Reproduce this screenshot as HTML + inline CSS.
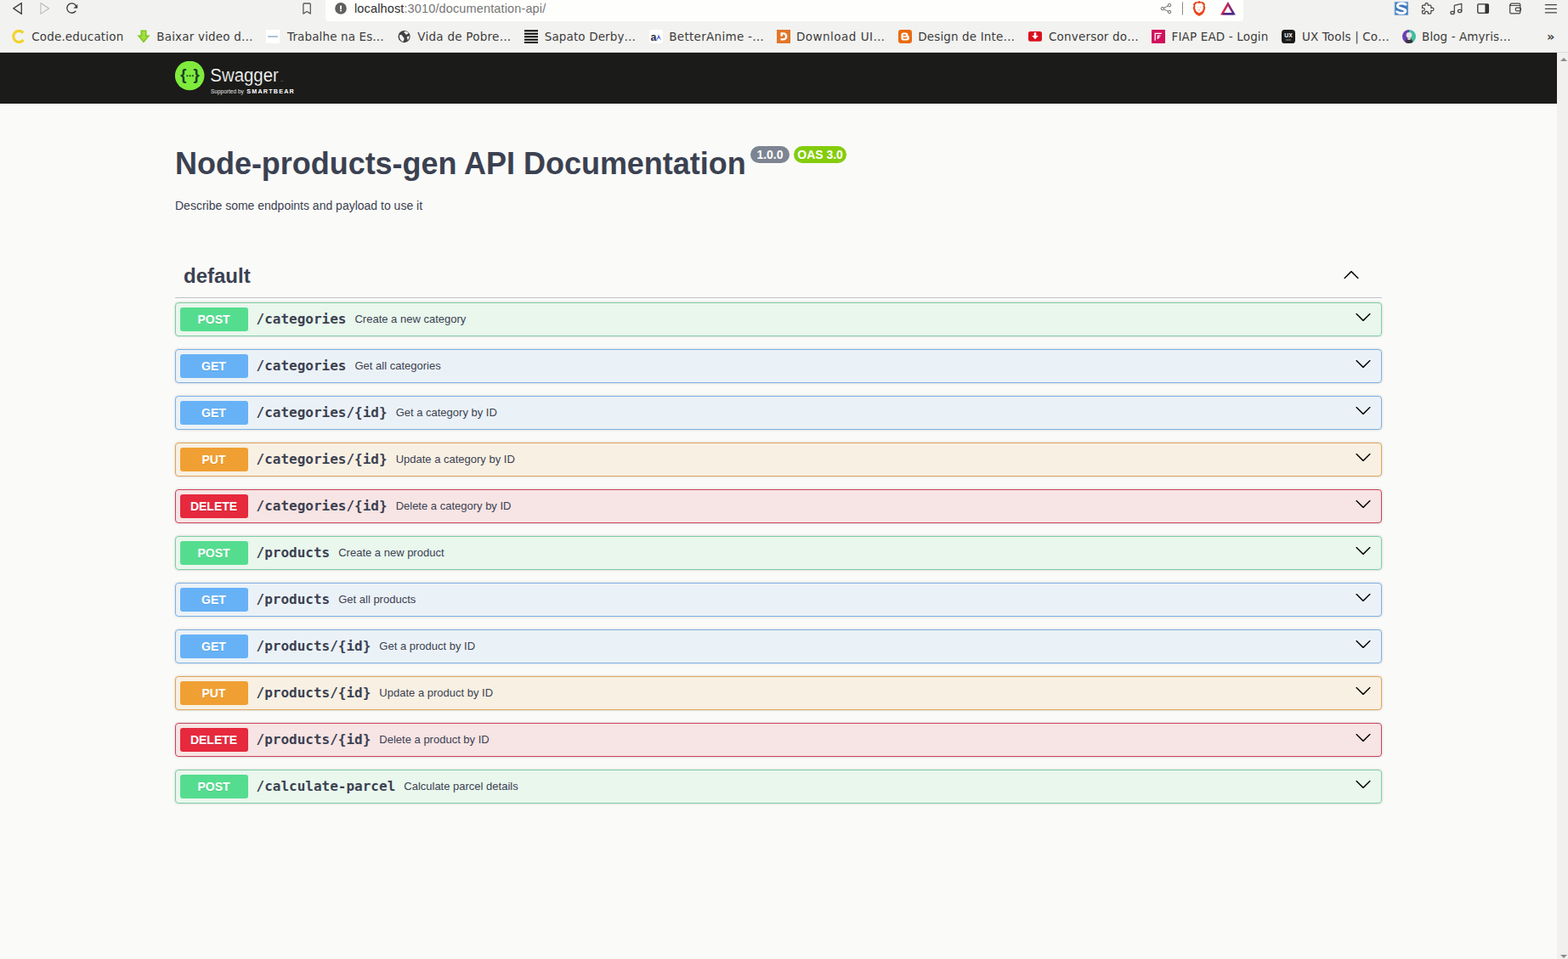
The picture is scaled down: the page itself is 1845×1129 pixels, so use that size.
<!DOCTYPE html>
<html lang="en">
<head>
<meta charset="utf-8">
<title>Swagger UI</title>
<style>
*{box-sizing:border-box}
html,body{margin:0;padding:0}
body{width:1845px;height:1129px;overflow:hidden;position:relative;background:#fafaf8;font-family:"Liberation Sans",sans-serif;color:#3b4151}
/* ---------- browser chrome ---------- */
#chrome{position:absolute;left:0;top:0;width:1845px;height:62px;background:#f2f2f0;border-bottom:1px solid #dcdcda;font-family:"DejaVu Sans","Liberation Sans",sans-serif;color:#3a3a3a}
#urlbar{position:absolute;left:383px;top:-6px;width:1080px;height:31px;background:#fefefd;border-radius:4px}
#url{position:absolute;left:417px;top:0;font-family:"Liberation Sans",sans-serif;font-size:14.5px;line-height:20px;color:#767676;white-space:nowrap;letter-spacing:.135px}
#url b{font-weight:normal;color:#2e2e2e}
.ic{position:absolute}
.bm{position:absolute;top:32px;height:22px;line-height:22px;font-size:13.5px;white-space:nowrap;color:#3c3c3c}
.fav{position:absolute;top:35px;width:16px;height:16px}
/* ---------- page ---------- */
#page{position:absolute;left:0;top:62px;width:1832px;height:1067px;background:#fafaf8;overflow:hidden}
#scroll{position:absolute;left:1832px;top:62px;width:13px;height:1067px;background:#f1f0ee}
#scroll i{position:absolute;left:3.5px;width:0;height:0;border-left:4px solid transparent;border-right:4px solid transparent}
#scroll .up{top:6px;border-bottom:4.5px solid #8e8a8c}
#scroll .dn{bottom:1px;border-top:4.5px solid #8e8a8c}
#topbar{background:#1b1b19;height:60px;padding:10px 0}
.wrap{width:1460px;margin:0 auto;padding:0 20px;position:relative}
#logo{display:block;height:40px;width:150px}
.info{margin:50px 0}
.info h2{margin:0;letter-spacing:-0.03px;font-size:36px;line-height:normal;font-weight:bold;color:#3b4151}
.info h2 span.badge{display:inline-block;vertical-align:super;font-size:10px}
.ver{display:inline-block;position:relative;top:-5px;vertical-align:super;margin:0 0 0 5px;padding:2px 4px;border-radius:57px;background:#7d8492;font-size:10px}
.ver pre{margin:0;padding:0;font-family:"Liberation Sans",sans-serif;font-size:14px;font-weight:bold;color:#fff;line-height:normal}
.ver.oas{background:#84cc0c}
.info p{margin:0;font-size:14px;line-height:normal;color:#3b4151}
.info p.desc{margin-top:20px}
.tag{display:flex;align-items:center;margin:0 0 5px;padding:10px 20px 10px 10px;border-bottom:1px solid rgba(59,65,81,.3);font-size:24px;font-weight:bold;color:#3b4151}
.tag span{flex:1;line-height:30px}
.op{display:flex;align-items:center;height:40px;margin:0 0 15px;padding:5px;border:1px solid #000;border-radius:4px;box-shadow:0 0 3px rgba(0,0,0,.19)}
.op .m{width:80px;padding:6px 1px 6px 0;border-radius:3px;text-align:center;font-size:14px;line-height:16px;font-weight:bold;color:#fff;text-shadow:0 1px 0 rgba(0,0,0,.1)}
.op .p{position:relative;top:-1px;left:-.5px;padding:0 10px;font-family:"DejaVu Sans Mono","Liberation Mono",monospace;font-size:16px;font-weight:bold;color:#3b4151;white-space:nowrap}
.op .d{position:relative;top:-1px;left:-.5px;flex:1;font-size:13px;color:#3b4151;white-space:nowrap}
.op svg{margin-right:6px;position:relative;top:-3px}
.tag svg{margin-right:6px;position:relative;top:-2px}
svg.arr{fill:#000;flex:none}
.post{border-color:#7fcda2;background:rgba(85,221,143,.1)}.post .m{background:#55dd8f}
.get{border-color:#7fb1e3;background:rgba(103,178,246,.1)}.get .m{background:#67b2f6}
.put{border-color:#dfa45a;background:rgba(240,160,51,.1)}.put .m{background:#f0a033}
.delete{border-color:#cc4458;background:rgba(230,41,61,.1)}.delete .m{background:#e6293d}
</style>
</head>
<body>
<div id="page">
  <div id="topbar"><div class="wrap">
    <svg id="logo" viewBox="0 0 150 40"><circle cx="17.2" cy="17" r="17.3" fill="#7feb3c"/><g font-family="Liberation Sans, sans-serif" font-weight="bold" font-size="18.5" fill="#173d2a" text-anchor="middle"><text x="9.8" y="22.2">{</text><text x="25.1" y="22.2">}</text></g><circle cx="14.4" cy="17.2" r="1.05" fill="#173d2a"/><circle cx="17.65" cy="17.2" r="1.05" fill="#173d2a"/><circle cx="20.9" cy="17.2" r="1.05" fill="#173d2a"/><text x="41.3" y="24.4" font-family="Liberation Sans, sans-serif" font-size="22" fill="#fff" stroke="#1b1b19" stroke-width="0.22" textLength="80.5" lengthAdjust="spacingAndGlyphs">Swagger</text><text x="124.2" y="23.8" font-family="Liberation Sans, sans-serif" font-size="2.2" fill="#999">TM</text><text x="42" y="38.2" font-family="Liberation Sans, sans-serif" font-size="6.6" fill="#e4e4e4" textLength="38.8" lengthAdjust="spacingAndGlyphs">Supported by</text><text x="84.2" y="38.2" font-family="Liberation Sans, sans-serif" font-weight="bold" font-size="7.2" fill="#fff" textLength="55.6" lengthAdjust="spacing">SMARTBEAR</text></svg>
  </div></div>
  <div class="wrap">
    <div class="info">
      <h2>Node-products-gen API Documentation<span class="ver"><pre> 1.0.0 </pre></span><span class="ver oas"><pre>OAS 3.0</pre></span></h2>
      <p class="desc">Describe some endpoints and payload to use it</p>
    </div>
    <div class="tag"><span>default</span><svg class="arr" width="20" height="20" viewBox="0 0 20 20"><path d="M17.418 14.908c.272.268.709.268.979 0s.271-.701 0-.969l-7.908-7.83c-.27-.268-.707-.268-.979 0l-7.908 7.83c-.27.268-.27.701 0 .969.271.268.709.268.979 0L10 7.767l7.418 7.141z"/></svg></div>
    <div class="op post"><div class="m">POST</div><div class="p">/categories</div><div class="d">Create a new category</div><svg class="arr" width="20" height="20" viewBox="0 0 20 20"><path d="M17.418 6.109c.272-.268.709-.268.979 0s.271.701 0 .969l-7.908 7.83c-.27.268-.707.268-.979 0l-7.908-7.83c-.27-.268-.27-.701 0-.969.271-.268.709-.268.979 0L10 13.25l7.418-7.141z"/></svg></div>
    <div class="op get"><div class="m">GET</div><div class="p">/categories</div><div class="d">Get all categories</div><svg class="arr" width="20" height="20" viewBox="0 0 20 20"><path d="M17.418 6.109c.272-.268.709-.268.979 0s.271.701 0 .969l-7.908 7.83c-.27.268-.707.268-.979 0l-7.908-7.83c-.27-.268-.27-.701 0-.969.271-.268.709-.268.979 0L10 13.25l7.418-7.141z"/></svg></div>
    <div class="op get"><div class="m">GET</div><div class="p">/categories/{id}</div><div class="d">Get a category by ID</div><svg class="arr" width="20" height="20" viewBox="0 0 20 20"><path d="M17.418 6.109c.272-.268.709-.268.979 0s.271.701 0 .969l-7.908 7.83c-.27.268-.707.268-.979 0l-7.908-7.83c-.27-.268-.27-.701 0-.969.271-.268.709-.268.979 0L10 13.25l7.418-7.141z"/></svg></div>
    <div class="op put"><div class="m">PUT</div><div class="p">/categories/{id}</div><div class="d">Update a category by ID</div><svg class="arr" width="20" height="20" viewBox="0 0 20 20"><path d="M17.418 6.109c.272-.268.709-.268.979 0s.271.701 0 .969l-7.908 7.83c-.27.268-.707.268-.979 0l-7.908-7.83c-.27-.268-.27-.701 0-.969.271-.268.709-.268.979 0L10 13.25l7.418-7.141z"/></svg></div>
    <div class="op delete"><div class="m">DELETE</div><div class="p">/categories/{id}</div><div class="d">Delete a category by ID</div><svg class="arr" width="20" height="20" viewBox="0 0 20 20"><path d="M17.418 6.109c.272-.268.709-.268.979 0s.271.701 0 .969l-7.908 7.83c-.27.268-.707.268-.979 0l-7.908-7.83c-.27-.268-.27-.701 0-.969.271-.268.709-.268.979 0L10 13.25l7.418-7.141z"/></svg></div>
    <div class="op post"><div class="m">POST</div><div class="p">/products</div><div class="d">Create a new product</div><svg class="arr" width="20" height="20" viewBox="0 0 20 20"><path d="M17.418 6.109c.272-.268.709-.268.979 0s.271.701 0 .969l-7.908 7.83c-.27.268-.707.268-.979 0l-7.908-7.83c-.27-.268-.27-.701 0-.969.271-.268.709-.268.979 0L10 13.25l7.418-7.141z"/></svg></div>
    <div class="op get"><div class="m">GET</div><div class="p">/products</div><div class="d">Get all products</div><svg class="arr" width="20" height="20" viewBox="0 0 20 20"><path d="M17.418 6.109c.272-.268.709-.268.979 0s.271.701 0 .969l-7.908 7.83c-.27.268-.707.268-.979 0l-7.908-7.83c-.27-.268-.27-.701 0-.969.271-.268.709-.268.979 0L10 13.25l7.418-7.141z"/></svg></div>
    <div class="op get"><div class="m">GET</div><div class="p">/products/{id}</div><div class="d">Get a product by ID</div><svg class="arr" width="20" height="20" viewBox="0 0 20 20"><path d="M17.418 6.109c.272-.268.709-.268.979 0s.271.701 0 .969l-7.908 7.83c-.27.268-.707.268-.979 0l-7.908-7.83c-.27-.268-.27-.701 0-.969.271-.268.709-.268.979 0L10 13.25l7.418-7.141z"/></svg></div>
    <div class="op put"><div class="m">PUT</div><div class="p">/products/{id}</div><div class="d">Update a product by ID</div><svg class="arr" width="20" height="20" viewBox="0 0 20 20"><path d="M17.418 6.109c.272-.268.709-.268.979 0s.271.701 0 .969l-7.908 7.83c-.27.268-.707.268-.979 0l-7.908-7.83c-.27-.268-.27-.701 0-.969.271-.268.709-.268.979 0L10 13.25l7.418-7.141z"/></svg></div>
    <div class="op delete"><div class="m">DELETE</div><div class="p">/products/{id}</div><div class="d">Delete a product by ID</div><svg class="arr" width="20" height="20" viewBox="0 0 20 20"><path d="M17.418 6.109c.272-.268.709-.268.979 0s.271.701 0 .969l-7.908 7.83c-.27.268-.707.268-.979 0l-7.908-7.83c-.27-.268-.27-.701 0-.969.271-.268.709-.268.979 0L10 13.25l7.418-7.141z"/></svg></div>
    <div class="op post"><div class="m">POST</div><div class="p">/calculate-parcel</div><div class="d">Calculate parcel details</div><svg class="arr" width="20" height="20" viewBox="0 0 20 20"><path d="M17.418 6.109c.272-.268.709-.268.979 0s.271.701 0 .969l-7.908 7.83c-.27.268-.707.268-.979 0l-7.908-7.83c-.27-.268-.27-.701 0-.969.271-.268.709-.268.979 0L10 13.25l7.418-7.141z"/></svg></div>
  </div>
</div>
<div id="scroll"><i class="up"></i><i class="dn"></i></div>
<div id="chrome">
  <div id="urlbar"></div>
  <div id="url"><b>localhost</b>:3010/documentation-api/</div>
  <svg class="ic" style="left:0;top:0" width="120" height="26" viewBox="0 0 120 26" fill="none" stroke-linejoin="round" stroke-linecap="round"><path d="M25.300 3.600v12.800L15.800 9.950z" stroke="#454545" stroke-width="1.450"/><path d="M47.900 3.500v12.900l9.700-6.450z" stroke="#b9b9b7" stroke-width="1.050"/><path d="M88.87 13.26A5.7 5.7 0 1 1 89.67 7.19" stroke="#3d3d3d" stroke-width="1.35"/><path d="M91 5.7v3.7h-3.7z" fill="#3d3d3d" stroke="#3d3d3d" stroke-width=".5"/></svg>
  <svg class="ic" style="left:350px;top:0" width="24" height="26" viewBox="0 0 24 26" fill="none"><path d="M6.900 16.100V5a1 1 0 0 1 1-1h6.400a1 1 0 0 1 1 1v11.100L11.100 13.500z" stroke="#5a5a5a" stroke-width="1.300" stroke-linejoin="round"/></svg>
  <svg class="ic" style="left:392px;top:0" width="20" height="22" viewBox="0 0 20 22"><circle cx="9" cy="9.900" r="6.800" fill="#606060"/><rect x="8" y="6.600" width="2" height="4.300" fill="#fff"/><rect x="8" y="11.700" width="2" height="1.700" fill="#fff"/></svg>
  <svg class="ic" style="left:1360px;top:0" width="100" height="22" viewBox="0 0 100 22" fill="none"><g stroke="#666" stroke-width=".95"><circle cx="7.900" cy="10.100" r="1.750"/><circle cx="16" cy="6.200" r="1.750"/><circle cx="16" cy="14" r="1.750"/><path d="M9.500 9.300l4.900-2.350M9.500 10.900l4.900 2.350"/></g><path d="M31.500 2.300v15.300" stroke="#8a8a8a" stroke-width="1"/><path d="M51 1l2.200 1.300h2.300l2.600 2.600-.7 1.700.9 2.600-1.500 5-2.200 2.700L51 18.900l-3.600-2-2.200-2.700-1.500-5 .9-2.600-.7-1.700 2.600-2.600h2.300z" fill="#e8451a"/><path transform="translate(51 9.600) scale(1.180) translate(-51 -9.900)" d="M51 5.200l2.100-.5 2.100 1.900-.4 1.600.5 1.300-1.200 3.200-3.100 2.300-3.100-2.300-1.200-3.200.5-1.300-.4-1.600 2.100-1.900z" fill="#fff"/><path d="M49.300 8.200l1.100.8-.9.300zM52.700 8.200l-1.100.8.900.3zM50.200 11.800l.8-.5.800.5-.8.800z" fill="#e8451a"/><defs><linearGradient id="bat" x1="0" x2="1" y1="0" y2="0"><stop offset="0" stop-color="#f02640"/><stop offset=".5" stop-color="#b3245f"/><stop offset="1" stop-color="#4b2a8e"/></linearGradient></defs><path d="M84.900 4.700l6.700 11.500H78.200z" stroke="url(#bat)" stroke-width="2.600" stroke-linejoin="miter"/><path d="M78.500 16.300h13" stroke="#4b2a8e" stroke-width="2.400"/></svg>
  <svg class="ic" style="left:1636px;top:0" width="200" height="22" viewBox="0 0 200 22" fill="none" stroke-linejoin="round" stroke-linecap="round"><rect x="5.300" y="2.300" width="15.500" height="15.400" fill="#3a78bc" stroke="#8fb0d8" stroke-width=".6"/><path d="M18 5.200c-5-2.600-10.500-.8-9.500 2.300 1 3 8.500 2 9.300 5.200.7 3-5.800 3.900-10 1.200" stroke="#fff" stroke-width="3"/><path d="M42.600 3.600c1.500 0 2.100 1.400 1.500 2.500h2.800c.6 0 1 .4 1 1v2.300c1.500-.8 3.100 0 3.100 1.500s-1.600 2.300-3.100 1.500v2.700c0 .6-.4 1-1 1h-2.600c.7-1.600-.3-2.800-1.700-2.800s-2.400 1.200-1.700 2.800h-2.400c-.6 0-1-.4-1-1v-2.600c1.400.7 2.800-.1 2.800-1.500s-1.400-2.200-2.800-1.500V7.100c0-.6.400-1 1-1h2.600c-.6-1.100 0-2.500 1.500-2.500z" stroke="#444" stroke-width="1.200"/><g stroke="#444" stroke-width="1.200"><path d="M75.300 14.900V6.300l8.500-1.900v8.500"/><ellipse cx="73.100" cy="15" rx="2.200" ry="1.700"/><ellipse cx="81.600" cy="13" rx="2.200" ry="1.700"/></g><rect x="102.800" y="4.900" width="12.600" height="10.400" rx="1" stroke="#333" stroke-width="1.300"/><rect x="111.400" y="4.900" width="4" height="10.400" fill="#333"/><g stroke="#444" stroke-width="1.200"><path d="M152.800 6.500H142a1.300 1.300 0 0 1 0-2.300h9.500a1.300 1.300 0 0 1 1.300 1.300v9a1.300 1.300 0 0 1-1.300 1.300H142a1.300 1.300 0 0 1-1.300-1.300V5.500"/><rect x="147.300" y="9.200" width="6.200" height="3.600" rx="1.200"/></g><path d="M182.400 5.600h13M182.400 10.300h13M182.400 14.900h13" stroke="#444" stroke-width="1.300"/></svg>
  <svg class="fav" style="left:13.5px" viewBox="0 0 16 16"><path d="M13.3 3.6A6.6 6.6 0 1 0 13.6 12" fill="none" stroke="#f2d327" stroke-width="3.1"/></svg>
  <span class="bm" style="left:37.14px;letter-spacing:0.175px">Code.education</span>
  <svg class="fav" style="left:161.1px" viewBox="0 0 16 16"><path d="M4.5 0.5h7v6h4L8 15.5 0.5 6.5h4z" fill="#7ec621"/><path d="M6 2h4v6h2.5L8 13 3.5 8H6z" fill="#a4dc3c"/></svg>
  <span class="bm" style="left:184.24px;letter-spacing:0.191px">Baixar video d…</span>
  <svg class="fav" style="left:313.0px" viewBox="0 0 16 16"><rect width="16" height="16" fill="#fff"/><rect x="2.2" y="7.3" width="11.6" height="1.5" fill="#6f8fc0" opacity=".75"/></svg>
  <span class="bm" style="left:338.04px;letter-spacing:0.127px">Trabalhe na Es…</span>
  <svg class="fav" style="left:467.8px" viewBox="0 0 16 16"><circle cx="7.6" cy="8.1" r="7.1" fill="#3f4042"/><path d="M2.2 6.2c1.6-.4 3.3.2 3.6 1.6.3 1.5 1.7 1.2 1.8 2.6.1 1.300-1 2.300-1.300 3.600C3.500 13.200 1.500 10 2.200 6.200zM8.200 2c1.900-.3 3.700.6 4.700 2.100-1.300.4-1.400 1.700-2.800 1.700-1.300 0-.7-1.500-1.900-1.800-.9-.3-.7-1.300 0-2zM13.500 7.300c.3 1.900-.4 3.700-1.700 4.900-.6-.9-.2-1.800-.9-2.600-.600-.8.300-1.800 1.200-1.900.6-.1 1-.2 1.400-.4z" fill="#f2f2f0"/></svg>
  <span class="bm" style="left:491.28px;letter-spacing:0.258px">Vida de Pobre…</span>
  <svg class="fav" style="left:616.7px" viewBox="0 0 16 16"><path d="M0 1.200h16M0 4.700h16M0 8.200h16M0 11.700h16M0 15.100h16" stroke="#0a0a0a" stroke-width="2.1"/></svg>
  <span class="bm" style="left:640.76px;letter-spacing:0.125px">Sapato Derby…</span>
  <svg class="fav" style="left:763.9px" viewBox="0 0 16 16"><rect width="16" height="16" rx="3" fill="#fff"/><text x="1.600" y="12.600" font-family="Liberation Sans, sans-serif" font-weight="bold" font-size="12.500" fill="#2b2b33">a</text><path d="M8.500 12.500l2.500-7 3 7-2.800-3z" fill="#4b5fd0"/><path d="M2 11.600c3 .9 6 .2 8.500-2.100" stroke="#5a6ad8" stroke-width=".8" fill="none"/></svg>
  <span class="bm" style="left:787.24px;letter-spacing:0.299px">BetterAnime -…</span>
  <svg class="fav" style="left:913.7px" viewBox="0 0 16 16"><rect width="16" height="16" fill="#e2762a"/><path d="M4.500 3.200h3.200a4.700 4.700 0 0 1 0 9.400H4.500v-2.300h3.100a2.400 2.400 0 0 0 0-4.800H6.800v2.300H4.500z" fill="#fff"/></svg>
  <span class="bm" style="left:936.98px;letter-spacing:0.475px">Download UI…</span>
  <svg class="fav" style="left:1056.9px" viewBox="0 0 16 16"><rect width="16" height="16" rx="3.200" fill="#ea6a10"/><path d="M5.900 3.400h3a2.500 2.500 0 0 1 2.500 2.500v.6c0 .5.300.7.800.7.400 0 .600.300.600.700v2.200a2.500 2.500 0 0 1-2.500 2.500H5.900a2.500 2.500 0 0 1-2.500-2.500V5.900a2.500 2.500 0 0 1 2.500-2.500z" fill="#fff"/><rect x="5.500" y="5.400" width="3.600" height="1.500" rx=".75" fill="#ea6a10"/><rect x="5.500" y="9.100" width="5" height="1.500" rx=".75" fill="#ea6a10"/></svg>
  <span class="bm" style="left:1080.24px;letter-spacing:0.140px">Design de Inte…</span>
  <svg class="fav" style="left:1210.0px" viewBox="0 0 16 16"><rect x="0" y="1.900" width="16" height="11.800" rx="2.200" fill="#d9121c"/><path d="M6.700 3.300h2.600v3.600h2.500L8 11.200 4.200 6.900h2.500z" fill="#fff"/></svg>
  <span class="bm" style="left:1233.88px;letter-spacing:0.200px">Conversor do…</span>
  <svg class="fav" style="left:1354.9px" viewBox="0 0 16 16"><rect width="16" height="16" fill="#d0105c"/><path d="M4.200 12.800V4.300h7.700" stroke="#fff" stroke-width="1.300" fill="none"/><path d="M7.300 11V7.200h3.200M7.300 9.200h2.300" stroke="#fff" stroke-width="1.200" fill="none"/></svg>
  <span class="bm" style="left:1378.50px;letter-spacing:0.158px">FIAP EAD - Login</span>
  <svg class="fav" style="left:1507.9px" viewBox="0 0 16 16"><rect width="16" height="16" rx="3.600" fill="#1a1a1a"/><text x="8" y="8.800" text-anchor="middle" font-family="Liberation Sans, sans-serif" font-weight="bold" font-size="6.800" fill="#fff">UX</text><text x="8" y="12.600" text-anchor="middle" font-family="Liberation Sans, sans-serif" font-size="3" fill="#bbb">tools</text></svg>
  <span class="bm" style="left:1531.88px;letter-spacing:0.147px">UX Tools | Co…</span>
  <svg class="fav" style="left:1649.6px" viewBox="0 0 16 16"><defs><clipPath id="av"><circle cx="8" cy="8" r="8"/></clipPath></defs><g clip-path="url(#av)"><rect width="8" height="16" fill="#6a3fb0"/><rect x="8" width="8" height="16" fill="#3fbf9a"/><circle cx="8" cy="6.200" r="3.300" fill="#e8e4ea"/><path d="M3.500 16c0-4 2-6 4.500-6s4.500 2 4.500 6z" fill="#3a3340"/><path d="M6.300 9h3.400v3H6.300z" fill="#d9c8c0"/></g></svg>
  <span class="bm" style="left:1673.12px;letter-spacing:0.078px">Blog - Amyris…</span>
  <span class="bm" style="left:1820px;top:31.500px;font-size:14.500px;font-weight:bold;color:#454545">»</span>
</div>
</body>
</html>
